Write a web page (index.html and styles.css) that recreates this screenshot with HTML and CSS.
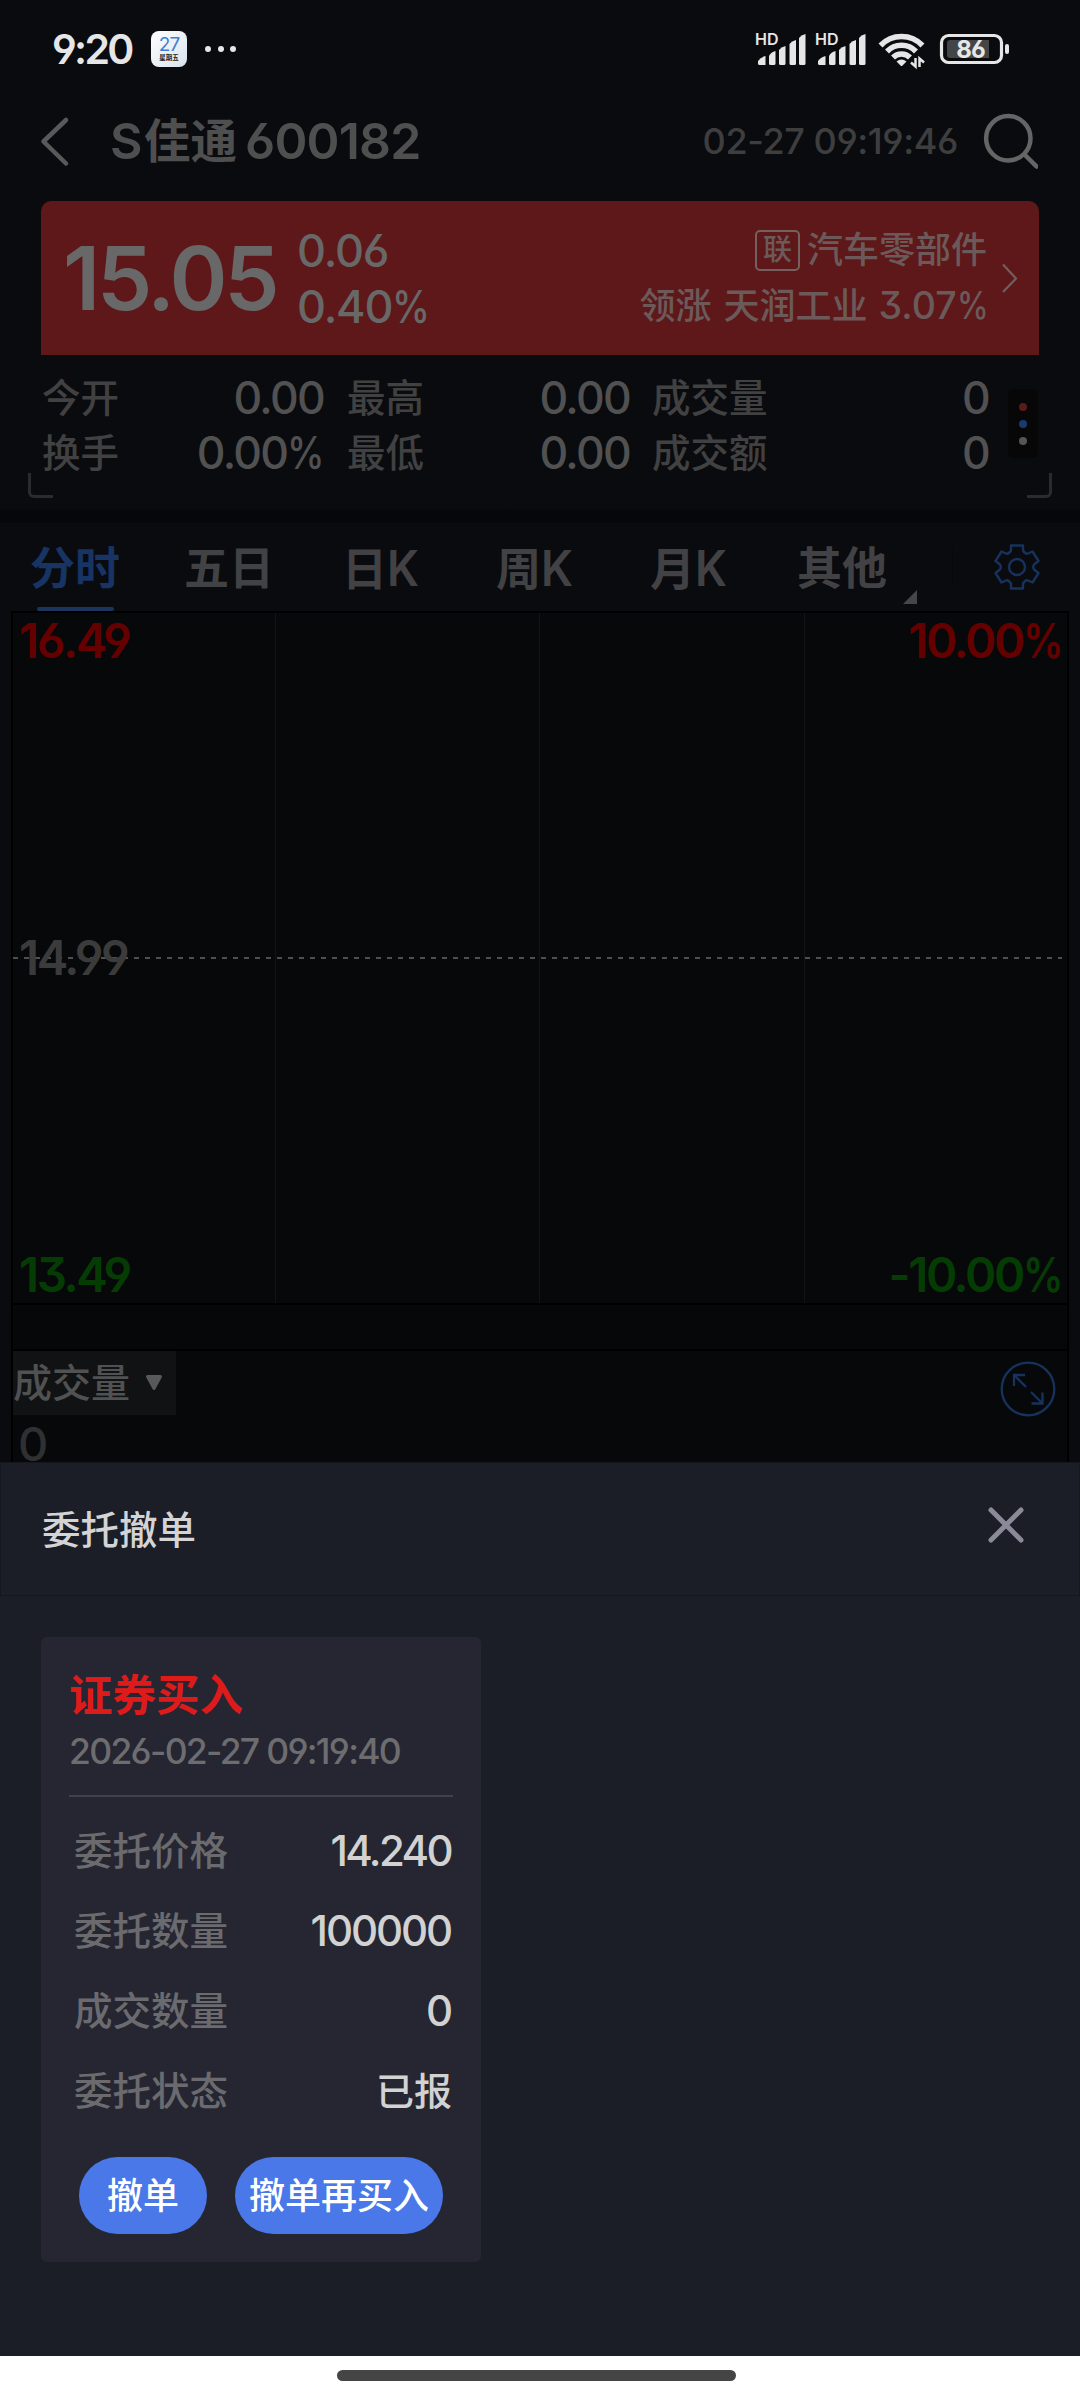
FILE: index.html
```html
<!DOCTYPE html>
<html lang="zh-CN">
<head>
<meta charset="utf-8">
<title>S佳通 600182</title>
<link rel="stylesheet" href="styles.css">
</head>
<body>
<div class="screen">
  <header class="status">
    <span class="clock">9:20</span>
    <span class="cal"><b>27</b><i>星期五</i></span>
    <span class="dots"><i></i><i></i><i></i></span>
    <svg class="sys" width="260" height="44" viewBox="750 27 260 44">
      <g id="sig">
        <text x="755" y="45" class="hd">HD</text>
        <g fill="#e6e6e6">
          <path d="M758 61q3-4 7.500-5v9h-6q-1.500 0-1.500-1.500z"/>
          <path d="M769 56q2-4 6.500-5v12.500q0 1.500-1.500 1.500h-3.500q-1.500 0-1.500-1.500z"/>
          <path d="M779 50q2-3 6.500-4v17.500q0 1.500-1.500 1.500h-3.500q-1.500 0-1.500-1.500z"/>
          <path d="M789.500 44q2-3 6.500-4v23.500q0 1.500-1.500 1.500h-3.500q-1.500 0-1.500-1.500z"/>
          <path d="M799 38q2-3 6.500-4v29.500q0 1.500-1.500 1.500h-3.500q-1.500 0-1.500-1.500z"/>
        </g>
      </g>
      <use href="#sig" x="60"/>
      <g fill="none" stroke="#e6e6e6" stroke-width="5.500">
        <path d="M880.500 45.500A29 29 0 0 1 922.500 45.500"/>
        <path d="M887 51.500A20 20 0 0 1 916 51.500"/>
        <path d="M893 57.500A12 12 0 0 1 910 57.500"/>
      </g>
      <path d="M896.500 61.500q5-4 10 0l-4 4q-1 1-2 0z" fill="#e6e6e6"/>
      <path d="M915.500 58v8.500l-4.500-4M919.500 67v-8.500l4.500 4" fill="none" stroke="#e6e6e6" stroke-width="2.500"/>
      <rect x="941.500" y="35.500" width="60" height="27" rx="7" fill="none" stroke="#e6e6e6" stroke-width="3.200"/>
      <path d="M950 40h39v18h-39q-3 0-3-3v-12q0-3 3-3z" fill="#444547"/>
      <rect x="1005" y="44" width="4" height="10" rx="2" fill="#e6e6e6"/>
      <text x="970.500" y="58" class="batt">86</text>
    </svg>
  </header>

  <div class="titlebar">
    <svg class="back" width="30" height="52" viewBox="40 114 30 52"><path d="M66 119L43.500 140.500L66 162.500" fill="none" stroke="#595959" stroke-width="4.500" stroke-linecap="round" stroke-linejoin="round"/></svg>
    <h1><span class="t-s">S</span><span class="t-n">佳通</span><span class="t-c">600182</span></h1>
    <span class="time">02-27 09:19:46</span>
    <svg class="search" width="56" height="58" viewBox="982 111 56 58"><g fill="none" stroke="#656565" stroke-width="4.500" stroke-linecap="round"><circle cx="1008.300" cy="137.300" r="22.200"/><path d="M1025 154L1036.500 165.500"/></g></svg>
  </div>

  <section class="quote">
    <div class="price">15.05</div>
    <div class="chg"><span>0.06</span><span>0.40<u>%</u></span></div>
    <div class="sector">
      <div class="s1"><span class="lian">联</span><span>汽车零部件</span></div>
      <div class="s2">领涨<span class="s2b">天润工业</span><span class="s2n">3.07<u>%</u></span></div>
    </div>
    <svg class="chev" width="18" height="32" viewBox="1001 262 18 32"><path d="M1003 264.500L1016 278.500L1003 292" fill="none" stroke="#6e6062" stroke-width="2.200"/></svg>
  </section>

  <section class="stats">
    <div class="grid">
      <span>今开</span><b>0.00</b><span>最高</span><b>0.00</b><span>成交量</span><b>0</b>
      <span>换手</span><b>0.00<u>%</u></b><span>最低</span><b>0.00</b><span>成交额</span><b>0</b>
    </div>
    <div class="more"><i class="r"></i><i class="b"></i><i class="g"></i></div>
    <i class="cnr l"></i><i class="cnr rt"></i>
  </section>

  <nav class="tabs">
    <span class="tab on">分时</span><span class="tab">五日</span><span class="tab k">日<em>K</em></span><span class="tab k">周<em>K</em></span><span class="tab k">月<em>K</em></span><span class="tab other">其他</span>
    <svg class="tri" width="14" height="14" viewBox="0 0 14 14"><path d="M14 0V14H0z" fill="#454648"/></svg>
    <i class="sep"></i>
    <svg class="gear" width="48" height="48" viewBox="-24 -24 48 48"><g fill="none" stroke="#17325c" stroke-width="2.400" stroke-linejoin="round"><circle r="8"/><path d="M-6-21.500H6V-16.500Q8.500-12.500 11-13.500L15.500-15.500L21.500-6L17-2.500Q15.500 0 17 2.500L21.500 6L15.500 15.500L11 13.500Q8.500 12.500 6 16.500V21.500H-6V16.500Q-8.500 12.500-11 13.500L-15.500 15.500L-21.500 6L-17 2.500Q-15.500 0-17-2.500L-21.500-6L-15.500-15.500L-11-13.500Q-8.500-12.500-6-16.500Z"/></g></svg>
  </nav>

  <section class="chart">
    <div class="plot">
      <div class="row up"><span>16.49</span><span>10.00<u>%</u></span></div>
      <div class="row mid"><span>14.99</span></div>
      <div class="row dn"><span>13.49</span><span>-10.00<u>%</u></span></div>
    </div>
    <div class="gap"></div>
    <div class="vol">
      <div class="vcol"><div class="chip">成交量<svg width="18" height="16" viewBox="0 0 18 16"><path d="M2.500 1.500H15.500L9 13.500z" fill="#58595a" stroke="#58595a" stroke-width="3" stroke-linejoin="round"/></svg></div><span class="zero">0</span></div>
      <svg class="exp" width="58" height="58" viewBox="-29 -29 58 58"><g fill="none" stroke="#17325c" stroke-width="2.300"><circle r="26.300"/><path d="M-2-2L-14-14M-14-3V-14H-3M3 3L14.500 14.500M14.500 3.500V14.500H3.500"/></g></svg>
    </div>
  </section>

  <section class="sheet">
    <div class="shead"><h2>委托撤单</h2><svg width="36" height="36" viewBox="0 0 36 36"><path d="M3 3L33 33M33 3L3 33" stroke="#8b8a99" stroke-width="5" stroke-linecap="round"/></svg></div>
    <article class="card">
      <h3>证券买入</h3>
      <div class="date">2026-02-27 09:19:40</div>
      <dl>
        <div><dt>委托价格</dt><dd class="dec">14.240</dd></div>
        <div><dt>委托数量</dt><dd>100000</dd></div>
        <div><dt>成交数量</dt><dd>0</dd></div>
        <div><dt>委托状态</dt><dd class="cn">已报</dd></div>
      </dl>
      <div class="btns"><button class="b1">撤单</button><button class="b2">撤单再买入</button></div>
    </article>
  </section>
  <footer class="home"><i></i></footer>
</div>
</body>
</html>
```
FILE: styles.css
```css
* { box-sizing: border-box; margin: 0; padding: 0; }
body { background: #0a0b0f; }
i, em { font-style: normal; }
/* narrow percent sign */
u { display: inline-block; text-decoration: none; transform: scaleX(.85); transform-origin: left; margin-right: -.13em; }
.screen {
  width: 1080px; height: 2400px; overflow: hidden;
  display: flex; flex-direction: column;
  background: #0a0b0f;
  font-family: Inter, "Noto Sans CJK SC", sans-serif;
  font-weight: 500;
  font-feature-settings: "cv03", "cv04", "cv09";
  white-space: nowrap;
}
.status { height: 98px; display: flex; align-items: center; padding-left: 52px; flex: none; }
.clock { font-size: 41px; font-weight: 600; color: #e6e6e6; width: 99px; letter-spacing: -2.700px; }
.cal {
  width: 36px; height: 36px; border-radius: 8px; display: flex; flex-direction: column; align-items: center;
  background: linear-gradient(135deg, #fff, #d8e2ec);
}
.cal b { font-size: 19px; line-height: 18px; margin-top: 5px; font-weight: 400; color: #3d7fd6; letter-spacing: -1px; }
.cal i { font-size: 6.500px; line-height: 8px; color: #222; font-weight: 700; }
.dots { display: flex; gap: 6.500px; margin-left: 18px; }
.dots i { width: 6px; height: 6px; border-radius: 50%; background: #e6e6e6; }
.sys { margin-left: auto; margin-right: 70px; }
.hd { font-size: 16px; font-weight: 600; fill: #e6e6e6; }
.batt { font-size: 24px; font-weight: 700; fill: #e6e6e6; text-anchor: middle; letter-spacing: -1px; }

.titlebar { height: 103px; flex: none; display: flex; align-items: center; padding: 0 42px 17px 40px; }
h1 { display: flex; align-items: center; margin-left: 40px; font-weight: 600; line-height: 60px; color: #4f4f4f; }
.t-s { font-size: 50px; width: 34px; }
.t-n { font-size: 46.500px; width: 101px; }
.t-c { font-size: 50px; letter-spacing: -.8px; }
.time { margin-left: auto; font-size: 36px; color: #3e3e3f; margin-right: 24px; letter-spacing: -.4px; }

.quote {
  height: 154px; flex: none; margin: 0 41px; border-radius: 10px 10px 0 0; background: #5e1819;
  display: flex; align-items: center; color: #686868; padding: 0 20px 0 22px;
}
.price { font-size: 88px; font-weight: 600; line-height: 154px; width: 234px; letter-spacing: -3.200px; }
.chg { display: flex; flex-direction: column; font-size: 45px; line-height: 56px; letter-spacing: -1.200px; padding-top: 1px; }
.sector { margin-left: auto; margin-right: 13px; font-size: 36px; line-height: 56px; color: #6c5a5a; display: flex; flex-direction: column; align-items: flex-end; }
.s1 { display: flex; align-items: center; margin-right: 1px; }
.lian { width: 45px; height: 41px; border: 2px solid #75605f; border-radius: 5px; font-size: 29px; line-height: 36px; text-align: center; margin-right: 7px; }
.s2 { margin-right: -1px; }
.s2b { margin-left: 12px; }
.s2n { margin-left: 11px; font-size: 37.500px; }

.stats { height: 168px; flex: none; display: flex; position: relative; padding: 16px 42px 0 42px; background: linear-gradient(#0a0b0f 152px, #060709 157px, #060709); }
.grid { display: grid; grid-template-columns: 131px 151px 153px 153px 160px 199px; grid-auto-rows: 55px; height: 110px; line-height: 55px; width: 947px; }
.grid span { font-size: 38.500px; color: #414142; }
.grid span:not(:nth-child(6n+1)) { padding-left: 23px; }
.grid span:nth-child(6n+5) { padding-left: 22px; }
.grid b { font-size: 44.500px; font-weight: 500; color: #515151; text-align: right; letter-spacing: -1.700px; }
.more { width: 30px; height: 69px; margin: 18px 0 0 auto; border-radius: 6px; background: #070708; display: flex; flex-direction: column; align-items: center; justify-content: center; gap: 9px; }
.more i { width: 8px; height: 8px; border-radius: 50%; }
.more .r { background: #5a1c18; } .more .b { background: #1a3a70; } .more .g { background: #555; }
.cnr { position: absolute; top: 118px; width: 25px; height: 25px; border-bottom: 3px solid #2a2b2d; }
.cnr.l { left: 28px; border-left: 3px solid #2a2b2d; border-bottom-left-radius: 6px; }
.cnr.rt { right: 28px; border-right: 3px solid #2a2b2d; border-bottom-right-radius: 6px; }

.tabs { height: 88px; flex: none; display: flex; padding-left: 30px; }
.tab { width: 154px; font-size: 45px; line-height: 91px; height: 88px; font-weight: 700; color: #424244; }
.tab em { display: inline-block; font-size: 49px; font-weight: 600; transform: scaleX(.93); transform-origin: left; }
.tab.k { padding-left: 4px; }
.tab.on { color: #173463; position: relative; }
.tab.on::after { content: ""; position: absolute; left: 7px; bottom: 0; width: 77px; height: 4px; border-radius: 2px; background: #1c355f; }
.tab.other { width: 157px; margin-left: -3px; }
.tri { margin: 67px 0 0 -51px; }
.sep { width: 1px; height: 39px; margin: 24px 0 0 35px; background: #07080b; }
.gear { margin: 20px 0 0 40px; }

.chart { width: 1058px; margin-left: 11px; flex: none; height: 851px; display: flex; flex-direction: column; background: #07080a; }
.plot {
  height: 694px; flex: none; border: 2px solid #000; display: flex; flex-direction: column; justify-content: space-between; padding: 0 5px 0 6px;
  background: linear-gradient(#131416, #131416) 262px 0/1px 100% no-repeat, linear-gradient(#131416, #131416) 526px 0/1px 100% no-repeat, linear-gradient(#131416, #131416) 791px 0/1px 100% no-repeat, repeating-linear-gradient(90deg, #4e4f50 0 5px, transparent 5px 11px) 0 344px/1049px 2px no-repeat;
}
.row { display: flex; justify-content: space-between; font-size: 47.500px; line-height: 56px; font-weight: 600; letter-spacing: -2.400px; }
.up { color: #640000; } .dn { color: #043c04; } .mid { color: #3b3b3c; }
.gap { height: 46px; flex: none; border: solid #000; border-width: 0 2px 2px; background: #060708; }
.vol { height: 111px; flex: none; border: solid #000; border-width: 0 2px; display: flex; justify-content: space-between; }
.chip { width: 163px; height: 64px; background: #111213; color: #505152; font-size: 39px; line-height: 58px; display: flex; align-items: center; gap: 15px; }
.zero { display: block; padding: 7px 0 0 5px; font-size: 47px; line-height: 40px; color: #2f3031; }
.zero { padding-top: 9px; }
.exp { margin: 9px 10px 0 0; }

.sheet { height: 894px; flex: none; background: #1b1e26; }
.shead { height: 134px; border: 1px solid #14171e; display: flex; align-items: center; justify-content: space-between; padding: 0 55px 0 41px; }
h2 { font-size: 38.500px; font-weight: 500; color: #d4d4d4; margin-bottom: 5px; }
.shead svg { margin-bottom: 8px; }
.card { width: 440px; height: 625px; margin: 41px 0 0 41px; border-radius: 6px; background: #252632; padding: 31px 28px 0; }
h3 { font-size: 43.500px; line-height: 54px; font-weight: 700; color: #de1b1b; }
.date { font-size: 35.500px; line-height: 59px; color: #6d6d70; height: 75px; border-bottom: 2px solid #3f404a; letter-spacing: -1.700px; }
dl { padding: 14px 0 0 5px; }
dl div { display: flex; justify-content: space-between; height: 80px; line-height: 80px; }
dt { font-size: 38.500px; color: #6b6b6f; }
dd { font-size: 42px; color: #d2d2d2; letter-spacing: -2.100px; padding-right: 2px; }
dd.dec { letter-spacing: -2.600px; }
dd.cn { font-size: 38px; letter-spacing: 0; padding-right: 1px; }
.btns { display: flex; padding: 26px 0 0 10px; gap: 28px; }
button { border: 0; height: 77px; border-radius: 39px; background: #4a78e9; color: #fff; font: 500 36px/70px Inter, "Noto Sans CJK SC", sans-serif; }
.b1 { width: 128px; } .b2 { width: 208px; }
.home { height: 44px; background: #fff; flex: none; padding: 14px 0 0 337px; }
.home i { display: block; width: 399px; height: 11px; border-radius: 6px; background: #454545; }
```
